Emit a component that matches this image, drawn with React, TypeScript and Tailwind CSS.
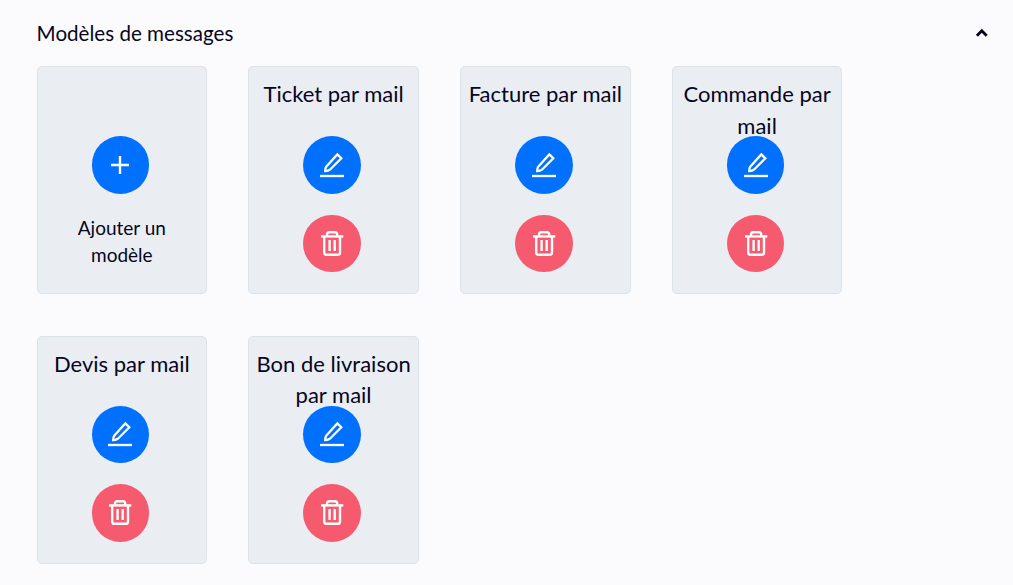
const templates = [
  "Ticket par mail",
  "Facture par mail",
  "Commande par mail",
  "Devis par mail",
  "Bon de livraison par mail",
];

function PlusIcon() {
  return (
    <svg width="28" height="28" viewBox="0 0 28 28" fill="none" stroke="white" strokeWidth="2.4">
      <path d="M5 14h18M14 5v18" />
    </svg>
  );
}

function EditIcon() {
  return (
    <svg width="28" height="28" viewBox="0 0 28 28" fill="none" stroke="white" strokeWidth="2.3">
      <path d="M2 25h24" />
      <path d="M19.3 3.4l4 3.9L11.9 18.7c-1 .9-2.4 1.3-4.7 1.4 0-2.3.3-3.7 1.2-4.7z" />
    </svg>
  );
}

function TrashIcon() {
  return (
    <svg width="28" height="28" viewBox="0 0 28 28" fill="none" stroke="white" strokeWidth="2.4">
      <path d="M3 6.4h22.3" />
      <path d="M9 6.4V4.6c0-1.6.8-2.4 2.4-2.4h5.4c1.6 0 2.4.8 2.4 2.4v1.8" />
      <path d="M6.200 6.4v16c0 1.6.8 2.4 2.4 2.4h11c1.6 0 2.4-.8 2.4-2.4v-16" />
      <path d="M11.6 10v11M16.700 10v11" />
    </svg>
  );
}

function TemplateCard({ title }: { title: string }) {
  return (
    <div className="h-[228px] rounded-[5px] border border-[#dbe3ea] bg-[#eaeef3] pt-[11px]">
      <h2 className="h-[58px] px-1 text-center text-[22px] leading-[31.5px]">
        {title}
      </h2>
      <div className="mr-[3px] flex flex-col items-center gap-[21.3px]">
        <button className="flex size-[57.6px] items-center justify-center rounded-full bg-[#0070ff]">
          <EditIcon />
        </button>
        <button className="flex size-[57.6px] items-center justify-center rounded-full bg-[#f65a6e]">
          <TrashIcon />
        </button>
      </div>
    </div>
  );
}

export default function App() {
  return (
    <div className="min-h-screen bg-[#fbfbfd] pt-4 pr-[25px] pl-[36.6px] font-['Lato',sans-serif] text-[#06061e]">
      {/* Header */}
      <div className="flex h-[50px] items-start justify-between">
        <h1 className="text-[20.6px] leading-[34px]">Modèles de messages</h1>
        <svg className="mt-2.5" width="13" height="14" viewBox="0 0 13 14" fill="none" stroke="currentColor" strokeWidth="2.8">
          <path d="M1.9 9.8l4.9-5 4.9 5" />
        </svg>
      </div>

      {/* Cards */}
      <div className="grid grid-cols-[repeat(4,170.5px)] gap-x-[41.25px] gap-y-[41.5px]">
        <div className="h-[228px] rounded-[5px] border border-[#dbe3ea] bg-[#eaeef3] pt-[69px]">
          <div className="mr-[3px] flex justify-center">
            <button className="flex size-[57.6px] items-center justify-center rounded-full bg-[#0070ff]">
              <PlusIcon />
            </button>
          </div>
          <p className="mt-[20.5px] px-8 text-center text-[19px] leading-[27px]">
            Ajouter un modèle
          </p>
        </div>
        {templates.map((title) => (
          <TemplateCard key={title} title={title} />
        ))}
      </div>
    </div>
  );
}
